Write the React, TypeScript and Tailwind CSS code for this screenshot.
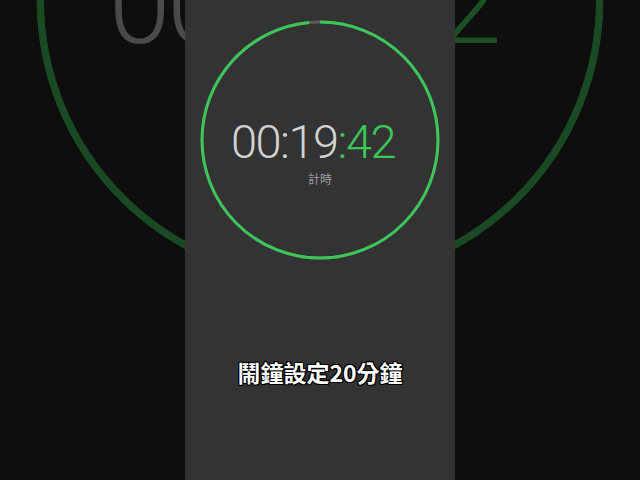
import React from "react";

type DialProps = {
  ring: string;
  track: string;
  main: string;
  accent: string;
  label: string;
  stroke: number;
};

function Dial({ ring, track, main, accent, label, stroke }: DialProps) {
  const r = 118;
  const c = 2 * Math.PI * r;
  const progress = 0.985;
  return (
    <div className="grid w-[240px] h-[240px] place-items-center">
      <svg
        width="240"
        height="240"
        viewBox="0 0 240 240"
        className="[grid-area:1/1]"
      >
        <circle cx="120" cy="120" r={r} fill="none" stroke={track} strokeWidth={stroke} />
        <circle
          cx="120"
          cy="120"
          r={r}
          fill="none"
          stroke={ring}
          strokeWidth={stroke}
          strokeDasharray={`${c * progress} ${c}`}
          transform="rotate(-90 120 120)"
        />
      </svg>
      <div className="[grid-area:1/1] flex flex-col items-center pt-[22px]">
        <div
          className="mr-[14px] text-[47px] leading-none font-light tracking-[-1.5px]"
          style={{ fontFamily: "Roboto, 'Noto Sans', sans-serif", color: main }}
        >
          00:19<span style={{ color: accent }}>:42</span>
        </div>
        <div
          className="mt-[8px] text-[12px] leading-none"
          style={{ fontFamily: "'Noto Sans CJK TC', sans-serif", color: label }}
        >
          計時
        </div>
      </div>
    </div>
  );
}

export default function App() {
  return (
    <div className="relative w-[640px] h-[480px] overflow-hidden bg-[#0e0e0e]">
      <div className="absolute left-[200px] top-[-120px] w-[240px] h-[240px] scale-[2.37]">
        <Dial
          ring="#1a4a23"
          track="#1a4a23"
          main="#4a4a4a"
          accent="#1c4f24"
          label="#262626"
          stroke={3}
        />
      </div>
      <div className="relative mx-auto w-[270px] h-[480px] bg-[#333333] flex flex-col items-center">
        <div className="mt-[20px]">
          <Dial
            ring="#3cc65a"
            track="#5a5a5a"
            main="#d2d2d2"
            accent="#3cc65a"
            label="#a0a0a0"
            stroke={3}
          />
        </div>
        <div
          className="mt-[101px] text-[23px] font-bold text-white leading-none"
          style={{
            fontFamily: "'Noto Sans CJK TC', 'Noto Sans', sans-serif",
            textShadow:
              "1px 1px 0 #000, -1px -1px 0 #000, 1px -1px 0 #000, -1px 1px 0 #000, 0 1px 0 #000, 0 -1px 0 #000, 1px 0 0 #000, -1px 0 0 #000",
          }}
        >
          鬧鐘設定20分鐘
        </div>
      </div>
    </div>
  );
}
